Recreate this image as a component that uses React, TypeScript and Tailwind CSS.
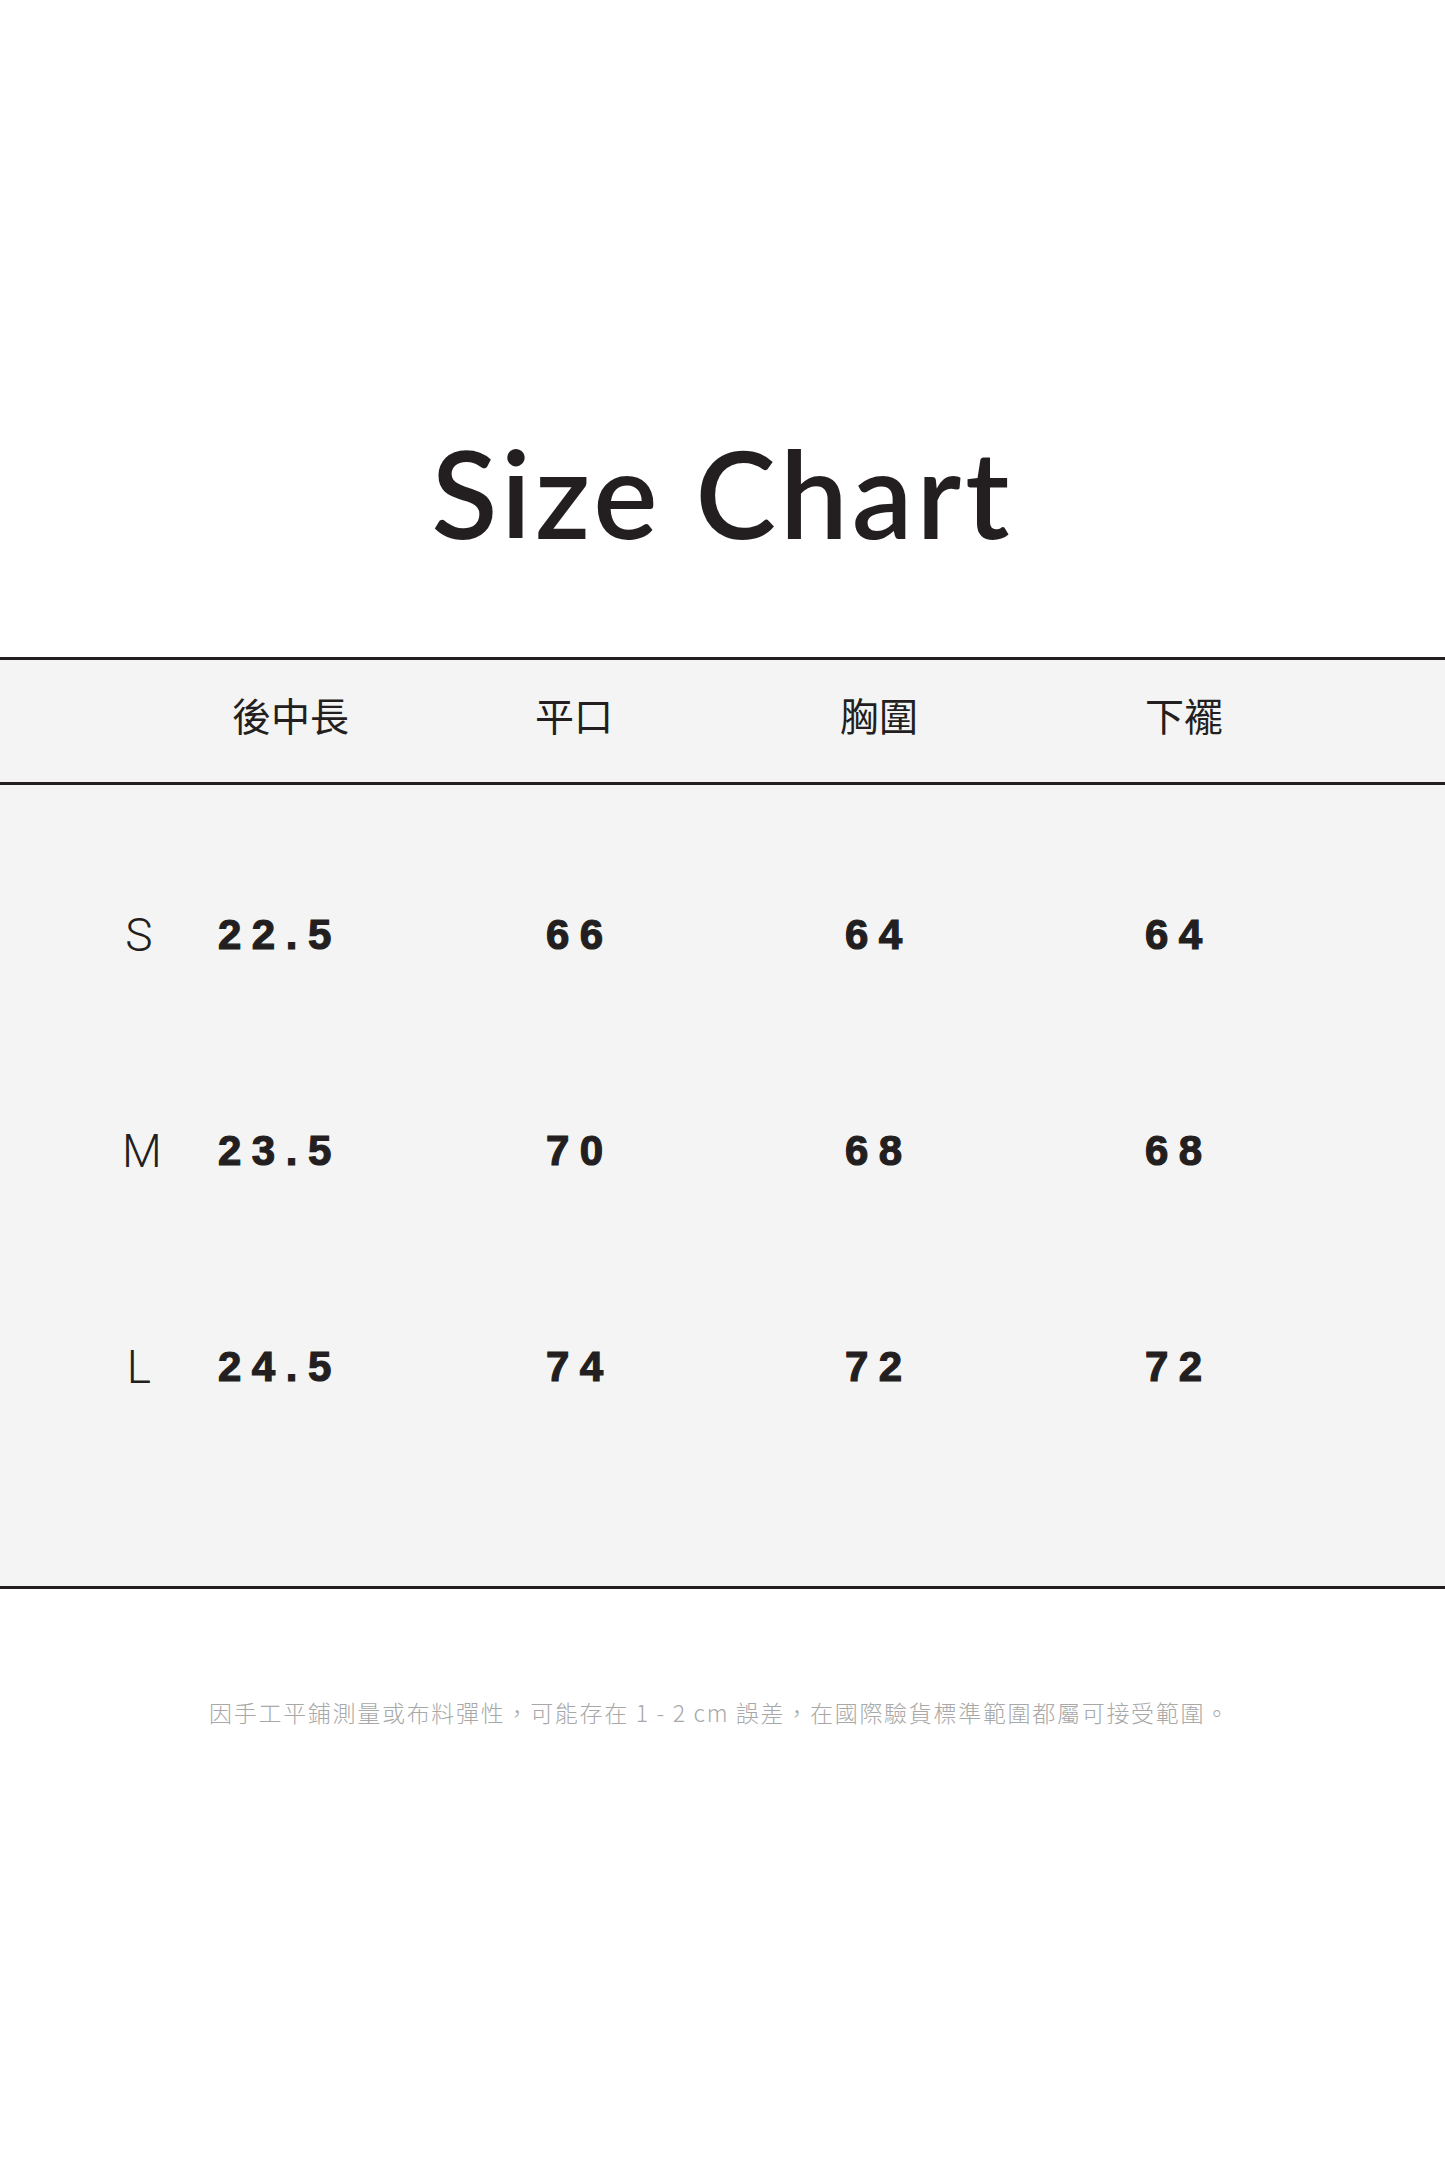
const headers = ["後中長", "平口", "胸圍", "下襬"];

const rows = [
    { size: "S", values: ["22.5", "66", "64", "64"] },
    { size: "M", values: ["23.5", "70", "68", "68"] },
    { size: "L", values: ["24.5", "74", "72", "72"] },
];

const cjk = "font-['Noto_Sans_CJK_TC','Noto_Sans',sans-serif]";

export default function App() {
    return (
        <div className="w-[1445px] h-[2167px] bg-white text-[#231f20] flex flex-col">
            {/* title */}
            <div className="h-[657px] flex justify-center pt-[413px]">
                <h1 className="font-['Lato',sans-serif] font-semibold text-[121px] leading-[160px] tracking-[4px]">
                    Size Chart
                </h1>
            </div>

            {/* table */}
            <div className="border-t-[3px] border-b-[3px] border-[#231f20] bg-[#f4f4f4]">
                <div className={`grid grid-cols-[232px_303px_305px_305px_1fr] h-[125px] pb-[13px] items-center border-b-[3px] border-[#231f20] ${cjk}`}>
                    <div />
                    {headers.map(h => (
                        <div key={h} className="text-[39px] leading-none">{h}</div>
                    ))}
                </div>

                <div className="pt-[42px] pb-[111px]">
                    {rows.map(row => (
                        <div key={row.size} className="grid grid-cols-[218px_328px_299px_300px_1fr] h-[216px] items-center">
                            <div className="pl-[122px]">
                                <span className="block w-[34px] text-center font-['Roboto',sans-serif] font-light text-[46px] leading-none">
                                    {row.size}
                                </span>
                            </div>
                            {row.values.map((v, i) => (
                                <div key={i} className="font-['Liberation_Sans',Arial,sans-serif] font-bold text-[42px] leading-none tracking-[0.25em] [-webkit-text-stroke:1.2px_#231f20]">
                                    {v}
                                </div>
                            ))}
                        </div>
                    ))}
                </div>
            </div>

            {/* note */}
            <div className="flex justify-center pt-[108px] pr-[6px]">
                <p className={`${cjk} font-light text-[23px] leading-[30px] text-[#a8a8a8] tracking-[1.7px]`}>
                    因手工平鋪測量或布料彈性，可能存在 1 - 2 cm 誤差，在國際驗貨標準範圍都屬可接受範圍。
                </p>
            </div>
        </div>
    );
}
